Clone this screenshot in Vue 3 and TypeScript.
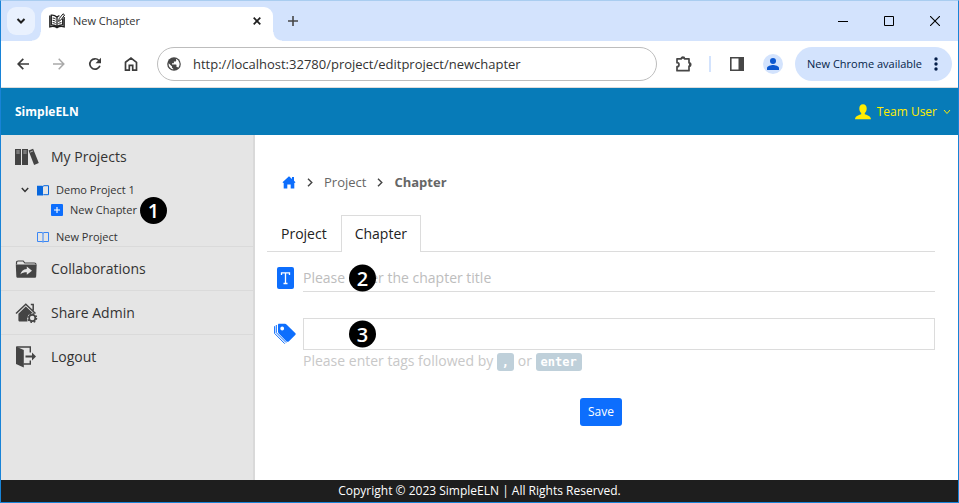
<script setup lang="ts">
import { ref } from 'vue'

const address = ref('http://localhost:32780/project/editproject/newchapter')
const title = ref('')
const tags = ref('')
const treeOpen = ref(true)
const activeTab = ref('Chapter')
const tabs = ['Project', 'Chapter']
</script>

<template>
  <div class="window">
    <div class="tabstrip">
      <button class="tab-search" type="button" aria-label="Search tabs">
        <svg width="10" height="10" viewBox="0 0 10 10"><path d="M1.5 3 5 6.5 8.500 3" fill="none" stroke="#1f1f1f" stroke-width="2" /></svg>
      </button>
      <div class="browser-tab">
        <svg class="favicon" width="16" height="16" viewBox="0 0 16 16">
          <path d="M.8 2.500v11.300c2.600-.8 5-.6 7.200.9 2.200-1.500 4.600-1.700 7.200-.9V4M8 4.200v10.300M8 4.200C6.200 2.400 4.200 1.900 2.300 2.100v9.800c2.200-.3 4 .2 5.700 1.800 1.700-1.600 3.500-2.100 5.700-1.800V5.500M8 4.200c.7-.8 1.500-1.300 2.400-1.600" fill="none" stroke="#202020" stroke-width="1.300" />
          <path d="m9.600 8.500.6-2.800L14 .8l1.600 1.200-3.700 5zM3.600 5c1.200 0 2 .3 3 1M3.600 7.300c1.200 0 2 .3 3 1M3.600 9.600c1.200 0 2 .3 3 1M9.400 10.600c1-.6 1.800-.9 3-1" fill="none" stroke="#202020" stroke-width="1" />
        </svg>
        <span class="tab-title">New Chapter</span>
        <button class="plain" type="button" aria-label="Close tab">
          <svg width="8" height="8" viewBox="0 0 8 8"><path d="m.7.7 6.600 6.600M7.300.7.700 7.300" stroke="#1f1f1f" stroke-width="1.700" /></svg>
        </button>
      </div>
      <button class="plain new-tab" type="button" aria-label="New tab">
        <svg width="10" height="10" viewBox="0 0 10 10"><path d="M5 0v10M0 5h10" stroke="#474747" stroke-width="1.600" /></svg>
      </button>
      <div class="window-controls">
        <button class="plain" type="button" aria-label="Minimize"><svg width="10" height="10" viewBox="0 0 10 10"><path d="M0 5.500h10" stroke="#000" /></svg></button>
        <button class="plain" type="button" aria-label="Maximize"><svg width="10" height="10" viewBox="0 0 10 10"><path d="M.5.5h9v9h-9z" fill="none" stroke="#000" /></svg></button>
        <button class="plain" type="button" aria-label="Close"><svg width="10" height="10" viewBox="0 0 10 10"><path d="m0 0 10 10M10 0 0 10" stroke="#000" stroke-width="1.100" /></svg></button>
      </div>
    </div>

    <div class="toolbar">
      <button class="plain nav" type="button" aria-label="Back"><svg width="12" height="12" viewBox="0 0 12 12"><path d="M12 6H1.500M6.300.8 1.200 6l5.100 5.200" fill="none" stroke="#3c3c3c" stroke-width="1.700" /></svg></button>
      <button class="plain nav" type="button" aria-label="Forward"><svg width="12" height="12" viewBox="0 0 12 12"><path d="M0 6h10.500M5.700.8 10.800 6l-5.100 5.200" fill="none" stroke="#a9a9a9" stroke-width="1.500" /></svg></button>
      <button class="plain nav" type="button" aria-label="Reload"><svg width="14" height="14" viewBox="0 0 14 14"><path d="M11.900 8.800A5.200 5.200 0 1 1 10.900 3.500L12 4.700" fill="none" stroke="#3c3c3c" stroke-width="1.700" /><path d="M13 .8v5.500H7.500z" fill="#3c3c3c" /></svg></button>
      <button class="plain nav" type="button" aria-label="Home"><svg width="14" height="14" viewBox="0 0 14 14"><path d="M1.500 5.300 7 1.100l5.500 4.200v7.900H8.700V8.300H5.300v4.900H1.500z" fill="none" stroke="#3c3c3c" stroke-width="1.700" /></svg></button>
      <label class="address">
        <svg width="14" height="14" viewBox="0 0 14 14"><circle cx="7" cy="7" r="6.800" fill="#474747" /><path d="M1.700 6.200 5 9.500v.8c0 .7.500 1.200 1.200 1.200v1.100A5.600 5.600 0 0 1 1.700 6.200M8.900 1.800A5.600 5.600 0 0 1 11.200 10.700c-.2-.5-.6-.8-1.200-.8h-.5V8.200c0-.4-.2-.6-.6-.6H5V6.300h1.300c.4 0 .6-.3.6-.6V4.500h1.200c.7 0 1.100-.5 1.100-1.100z" fill="#fff" /></svg>
        <input v-model="address" type="text" aria-label="Address" />
      </label>
      <button class="plain ext" type="button" aria-label="Extensions"><svg width="18" height="18" viewBox="0 0 18 18"><path d="M2 3.800h4.300a1.600 1.600 0 0 1 3.200 0h4.500v4a1.700 1.700 0 0 1 0 3.400v4.500H2v-4a2 2 0 0 0 0-4z" fill="none" stroke="#474747" stroke-width="1.700" stroke-linejoin="round" /><path d="M6.300 3.800a1.600 1.600 0 0 1 3.200 0M14 7.800a1.700 1.700 0 0 1 0 3.400" fill="#474747" /></svg></button>
      <span class="divider"></span>
      <button class="plain" type="button" aria-label="Side panel"><svg width="14" height="14" viewBox="0 0 14 14"><path d="M.8.8h12.400v12.400H.8z" fill="none" stroke="#474747" stroke-width="1.600" /><path d="M8.500 1H13v12H8.500z" fill="#474747" /></svg></button>
      <button class="profile" type="button" aria-label="Profile"><svg width="12" height="12" viewBox="0 0 12 12"><circle cx="6" cy="3" r="3" fill="#0b57d0" /><path d="M0 12v-2c0-2 4-3 6-3s6 1 6 3v2z" fill="#0b57d0" /></svg></button>
      <button class="update" type="button">
        <span>New Chrome available</span>
        <svg width="4" height="16" viewBox="0 0 4 16" fill="#041e49"><circle cx="2" cy="3" r="1.700" /><circle cx="2" cy="8" r="1.700" /><circle cx="2" cy="13" r="1.700" /></svg>
      </button>
    </div>

    <header class="app-header">
      <a class="brand" href="#">SimpleELN</a>
      <button class="plain user" type="button">
        <svg width="16" height="16" viewBox="0 0 16 16"><path d="M8 .3c2.400 0 3.700 1.700 3.700 4.200 0 2-.8 3.700-1.900 4.600v1.200c1.700.7 5.900 1.500 6.200 5H0c.3-3.500 4.500-4.300 6.200-5V9.100C5.100 8.200 4.300 6.500 4.300 4.500 4.300 2 5.600.3 8 .3" fill="#ffed00" /></svg>
        <span>Team User</span>
        <svg width="8" height="6" viewBox="0 0 8 6"><path d="m1 1 3 3.500L7 1" fill="none" stroke="#ffed00" /></svg>
      </button>
    </header>

    <div class="body">
      <nav class="sidebar">
        <section class="group">
          <a class="item" href="#">
            <svg width="24" height="18" viewBox="0 0 24 18"><path d="M0 1h6v16H0zM7 1h6v16H7zM13.500 2.500l4.600-1.700 5.700 14.200-4.700 2z" fill="#444" /><path d="M1.300 3h3.400M8.300 3h3.400M1.300 5h3.400M8.300 5h3.400M15 4.200l3-1.200" stroke="#ccc" stroke-width=".8" /></svg>
            <span>My Projects</span>
          </a>
          <ul class="tree">
            <li>
              <button class="plain caret" type="button" aria-label="Toggle project" @click="treeOpen = !treeOpen"><svg width="8" height="6" viewBox="0 0 8 6"><path d="M.8 1 4 4.400 7.200 1" fill="none" stroke="#333" stroke-width="1.500" /></svg></button>
              <a class="leaf" href="#"><svg width="12" height="11" viewBox="0 0 12 11"><path d="M0 .7h5.300L6 1.300v9.200H0z" fill="#0867dd" /><path d="M6 1.300 7 .7h4.500v9H6.300" fill="none" stroke="#0867dd" /></svg>Demo Project 1</a>
            </li>
            <li v-if="treeOpen" class="nested">
              <a class="leaf" href="#"><svg width="12" height="12" viewBox="0 0 12 12"><rect width="12" height="12" rx="1" fill="#0d6efd" /><path d="M6 3v6M3 6h6" stroke="#fff" stroke-width="1.100" /></svg>New Chapter</a>
              <span class="marker after-leaf">1</span>
            </li>
            <li class="last">
              <a class="leaf" href="#"><svg width="12" height="11" viewBox="0 0 12 11"><path d="M.5 9.500v-9H5l1 .7 1-.7h4.500v9H7l-1 .7-1-.7zM6 1v9" fill="none" stroke="#3b87f5" /></svg>New Project</a>
            </li>
          </ul>
        </section>
        <section class="group">
          <a class="item" href="#">
            <svg width="24" height="18" viewBox="0 0 24 18"><path d="M1.500 4.500V2.800C1.500 1.500 2 1 3.200 1h5l1.600 2h9.500c1.200 0 1.700.5 1.700 1.500" fill="none" stroke="#444" stroke-width="1.200" /><path d="M.8 4.500h20.900l-.5 11.800c-.1 1-.7 1.500-1.700 1.500H3c-1 0-1.600-.5-1.700-1.500z" fill="#444" /><path d="M11.800 6.500 17 10.700l-5.200 4v-2.400c-2.800 0-4.600.4-6.400 2.200.4-3.300 2.800-5.200 6.400-5.600z" fill="#e5e5e5" /></svg>
            <span>Collaborations</span>
          </a>
        </section>
        <section class="group">
          <a class="item" href="#">
            <svg width="24" height="20" viewBox="0 0 24 20"><path d="m1 10.500 9.800-9.300L20.500 10.500M15.800 1.500h2.400v6" fill="none" stroke="#444" stroke-width="1.500" /><path d="m10.800 3.600 7.300 6.700c-4.300-.2-6.800 3.300-5.600 8.300H5c-1 0-1.600-.6-1.600-1.600v-6.300z" fill="#444" /><circle cx="17.200" cy="15" r="3.100" fill="none" stroke="#444" stroke-width="1.700" /><circle cx="17.200" cy="15" r="4.300" fill="none" stroke="#444" stroke-width="1.500" stroke-dasharray="1.700 1.677" /></svg>
            <span>Share Admin</span>
          </a>
        </section>
        <section class="group">
          <a class="item" href="#">
            <svg width="24" height="22" viewBox="0 0 24 22"><path d="M1 .5 8.800 4v17.500L1 18z" fill="#444" /><path d="M1.500 1h13.800v5.500M15.300 14.500V18H8.500" fill="none" stroke="#444" stroke-width="1.400" /><path d="M10.500 9.500H17V6.500l4 4-4 4v-3h-6.500z" fill="#444" /></svg>
            <span>Logout</span>
          </a>
        </section>
      </nav>

      <main class="content">
        <nav class="breadcrumb" aria-label="Breadcrumb">
          <a href="#" aria-label="Home"><svg width="14" height="13" viewBox="0 0 14 13"><path d="M7 .3 10 3V1h2v3.800l1.500 1.500-.8.800-.4-.3V12.500H8.700V8.500H5.300v4H1.700V6.800l-.4.300-.8-.8z" fill="#0d6efd" /></svg></a>
          <svg width="6" height="9" viewBox="0 0 6 9"><path d="m1 .8 3.800 3.700L1 8.200" fill="none" stroke="#444" stroke-width="1.400" /></svg>
          <a href="#">Project</a>
          <svg width="6" height="9" viewBox="0 0 6 9"><path d="m1 .8 3.800 3.700L1 8.200" fill="none" stroke="#444" stroke-width="1.400" /></svg>
          <strong>Chapter</strong>
        </nav>

        <div class="tabs" role="tablist">
          <button v-for="tab in tabs" :key="tab" type="button" role="tab" class="tab" :class="{ active: tab === activeTab }" :aria-selected="tab === activeTab" @click="activeTab = tab">{{ tab }}</button>
        </div>

        <form class="form" @submit.prevent>
          <div class="field">
            <label for="title" aria-label="Chapter title"><svg width="17" height="22" viewBox="0 0 17 22"><rect width="17" height="22" rx="2" fill="#0d6efd" /><path d="M4.500 8V5.800h8V8M8.500 6v10.500M6.500 16.500h4" fill="none" stroke="#fff" stroke-width="1.300" /></svg></label>
            <div class="control">
              <input id="title" v-model="title" class="line-input" type="text" placeholder="Please enter the chapter title" />
              <span class="marker on-input">2</span>
            </div>
          </div>
          <div class="field tag-field">
            <label for="tags" aria-label="Tags"><svg width="22" height="22" viewBox="0 0 22 22"><path fill-rule="evenodd" d="M5 .8h6c.6 0 1 .2 1.500.6l8.700 8.500c.7.7.7 1.400 0 2l-6.500 6.500c-.7.6-1.500.6-2.200 0L4.500 10.200c-.3-.4-.5-.8-.5-1.400V1.900C4 1.200 4.300.8 5 .8m3.200 2.800a1.900 1.900 0 1 0 0 3.800 1.900 1.900 0 0 0 0-3.800" fill="#0d6efd" /><path d="M.6 3.200v7.200l10.200 10.300M2.300 2v7.700l9.900 9.900" fill="none" stroke="#0d6efd" stroke-width="1" /></svg></label>
            <div class="control">
              <input id="tags" v-model="tags" class="box-input" type="text" aria-describedby="tags-hint" />
              <span class="marker on-input">3</span>
            </div>
          </div>
          <p id="tags-hint" class="hint">Please enter tags followed by <kbd>,</kbd> or <kbd>enter</kbd></p>
          <button class="save" type="submit">Save</button>
        </form>
      </main>
    </div>

    <footer class="footer">Copyright © 2023 SimpleELN | All Rights Reserved.</footer>
  </div>
</template>

<style>
body {
  background: #fff;
}
</style>

<style scoped>
* {
  box-sizing: border-box;
}
.window {
  display: flex;
  flex-direction: column;
  min-height: 100vh;
  border: 1px solid #1883d7;
  border-top-color: #a9cdf0;
  font-family: "Open Sans", "Noto Sans", sans-serif;
  font-size: 13px;
  line-height: 20px;
  color: #333;
}
button,
input {
  font: inherit;
  color: inherit;
}
a {
  color: inherit;
  text-decoration: none;
}
svg {
  display: block;
  flex: none;
}
.plain {
  display: flex;
  align-items: center;
  justify-content: center;
  padding: 0;
  border: 0;
  background: none;
}

/* Browser chrome */
.tabstrip {
  display: flex;
  align-items: center;
  height: 40px;
  padding-left: 6px;
  background: #d3e3fd;
}
.tab-search {
  display: flex;
  align-items: center;
  justify-content: center;
  width: 28px;
  height: 28px;
  margin-right: 6px;
  padding: 0;
  border: 0;
  border-radius: 9px;
  background: #e9f1fe;
}
.browser-tab {
  position: relative;
  display: flex;
  align-items: center;
  align-self: flex-end;
  width: 232px;
  height: 34px;
  padding: 0 12px 6px 8px;
  border-radius: 9px 9px 0 0;
  background: #fff;
  font-size: 11px;
}
.browser-tab::before,
.browser-tab::after {
  content: "";
  position: absolute;
  bottom: 0;
  width: 9px;
  height: 9px;
}
.browser-tab::before {
  right: 100%;
  background: radial-gradient(circle at 0 0, transparent 8px, #fff 9px);
}
.browser-tab::after {
  left: 100%;
  background: radial-gradient(circle at 100% 0, transparent 8px, #fff 9px);
}
.tab-title {
  flex: 1;
  margin-left: 8px;
}
.new-tab {
  width: 28px;
  height: 28px;
  margin-left: 6px;
}
.window-controls {
  display: flex;
  gap: 36px;
  margin-left: auto;
  padding-right: 18px;
}
.toolbar {
  display: flex;
  align-items: center;
  height: 47px;
  padding: 0 6px 0 15px;
  border-bottom: 1px solid #dcdcdc;
  background: #fff;
}
.nav {
  width: 14px;
  height: 28px;
  margin-right: 22px;
}
.address {
  display: flex;
  flex: 1;
  align-items: center;
  gap: 12px;
  min-width: 0;
  height: 34px;
  margin-left: -3px;
  padding: 0 9px;
  border: 1px solid #bdbdbd;
  border-radius: 17px;
}
.address input {
  flex: 1;
  min-width: 0;
  padding: 0;
  border: 0;
  outline: 0;
  background: none;
  font-size: 13px;
  color: #333;
}
.ext {
  margin-left: 18px;
}
.divider {
  width: 2px;
  height: 16px;
  margin: 0 19px 0 16px;
  background: #d3e3fd;
}
.profile {
  display: flex;
  align-items: center;
  justify-content: center;
  width: 20px;
  height: 20px;
  margin: 0 12px 0 19px;
  padding: 0;
  border: 0;
  border-radius: 50%;
  background: #d3e3fd;
}
.update {
  display: flex;
  align-items: center;
  gap: 12px;
  height: 34px;
  padding: 0 14px 0 12px;
  border: 0;
  border-radius: 17px;
  background: #d3e3fd;
  font-size: 11px;
  color: #041e49;
  white-space: nowrap;
}

/* Application */
.app-header {
  display: flex;
  align-items: center;
  justify-content: space-between;
  height: 47px;
  padding: 0 7px 0 14px;
  background: #077bb8;
}
.brand {
  font-size: 12px;
  font-weight: 700;
  color: #fff;
}
.user {
  gap: 6px;
  font-size: 12px;
  color: #ffed00;
}
.body {
  display: flex;
  flex: 1;
}
.sidebar {
  width: 254px;
  border-right: 2px solid #d9d9d9;
  background: #e5e5e5;
}
.group + .group {
  border-top: 1px solid #dadada;
}
.item {
  display: flex;
  align-items: center;
  gap: 12px;
  height: 43px;
  padding-left: 14px;
  font-size: 14px;
}
.tree {
  margin: 0;
  padding: 2px 0 0 20px;
  list-style: none;
  font-size: 11px;
}
.tree li {
  display: flex;
  align-items: center;
  height: 20px;
}
.leaf {
  display: flex;
  align-items: center;
  gap: 7px;
}
.caret {
  width: 8px;
  height: 20px;
  margin-right: 8px;
}
.tree .nested {
  padding-left: 30px;
}
.tree .last {
  height: 26px;
  padding: 8px 0 0 16px;
}
.marker {
  display: flex;
  align-items: center;
  justify-content: center;
  width: 27px;
  height: 27px;
  border-radius: 50%;
  background: #000;
  font-size: 20px;
  line-height: 27px;
  font-weight: 600;
  color: #fff;
}
.after-leaf {
  margin-left: 3px;
}
.on-input {
  position: absolute;
  top: 50%;
  left: 46px;
  transform: translateY(-50%);
}
.content {
  flex: 1;
  min-width: 0;
  padding: 37px 23px 20px 12px;
}
.breadcrumb {
  display: flex;
  align-items: center;
  gap: 11px;
  padding-left: 15px;
  color: #666;
}
.tabs {
  display: flex;
  margin-top: 23px;
  border-bottom: 1px solid #dcdcdc;
}
.tab {
  height: 37px;
  margin-bottom: -1px;
  padding: 0 13px;
  border: 1px solid transparent;
  border-bottom: 0;
  background: none;
  font-size: 14px;
  color: #222;
}
.tab.active {
  border-color: #dcdcdc;
  background: #fff;
}
.form {
  display: flex;
  flex-direction: column;
  padding-top: 12px;
}
.field {
  display: flex;
  align-items: center;
}
.field label {
  display: flex;
  justify-content: center;
  width: 36px;
}
.control {
  position: relative;
  flex: 1;
}
.line-input,
.box-input {
  display: block;
  width: 100%;
  padding: 0;
  border: 0 solid #dcdcdc;
  border-radius: 0;
  outline: 0;
  background: #fff;
  font-size: 14px;
}
.line-input {
  height: 28px;
  border-bottom-width: 1px;
}
.line-input::placeholder {
  color: #bdbdbd;
  opacity: 1;
}
.tag-field {
  margin-top: 26px;
}
.box-input {
  height: 32px;
  padding: 0 8px;
  border-width: 1px;
}
.hint {
  margin: 1px 0 0 36px;
  font-size: 14px;
  color: #c8c8c8;
}
kbd {
  padding: 2px 5px;
  border-radius: 3px;
  background: #bfd0da;
  font-family: "DejaVu Sans Mono", monospace;
  font-size: 12px;
  font-weight: 700;
  color: #fff;
}
.save {
  align-self: center;
  height: 28px;
  margin-top: 26px;
  padding: 0 8px;
  border: 0;
  border-radius: 3px;
  background: #0d6efd;
  font-size: 12px;
  color: #fff;
}
.footer {
  height: 22px;
  background: #1e1e1e;
  font-size: 12px;
  line-height: 22px;
  text-align: center;
  color: #fff;
}
</style>
